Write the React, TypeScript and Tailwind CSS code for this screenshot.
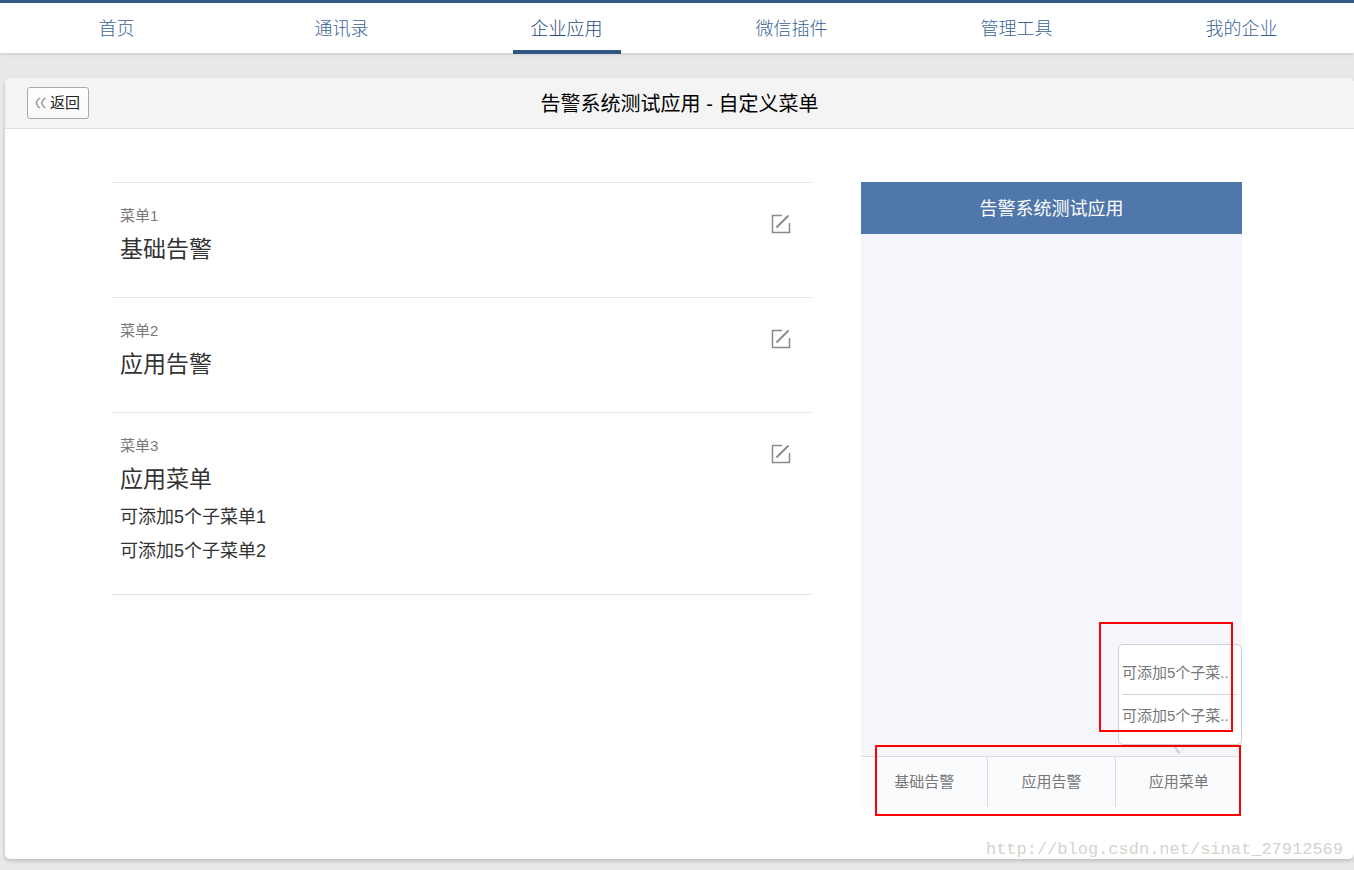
interface MenuItem {
	id: number;
	name: string;
	children: string[];
}

const NAV_ITEMS = ["首页", "通讯录", "企业应用", "微信插件", "管理工具", "我的企业"];
const ACTIVE_NAV = "企业应用";

const MENUS: MenuItem[] = [
	{ id: 1, name: "基础告警", children: [] },
	{ id: 2, name: "应用告警", children: [] },
	{ id: 3, name: "应用菜单", children: ["可添加5个子菜单1", "可添加5个子菜单2"] },
];

// Sub menu names are cut to seven characters in the preview
const shorten = (name: string): string => (name.length > 7 ? `${name.slice(0, 7)}..` : name);

function EditIcon() {
	return (
		<svg width="20" height="20" viewBox="0 0 20 20" fill="none" stroke="#8a8a8a">
			<path d="M11 1.5H1.5V18.5H18.5V9" strokeWidth="1.5" />
			<path d="M5.5 13.5L17.5 1.5" strokeWidth="2" />
		</svg>
	);
}

function BackIcon() {
	return (
		<svg width="12" height="12" viewBox="0 0 12 12" fill="none" stroke="#9a9a9a" strokeWidth="1.5">
			<path d="M5 1L3 2.5L1.2 6L3 9.5L5 11" />
			<path d="M10.5 1L8.5 2.5L6.7 6L8.5 9.5L10.5 11" />
		</svg>
	);
}

function TopNav() {
	return (
		<header className="relative border-t-[3px] border-[#335a86] bg-white shadow-[0_1px_4px_rgba(0,0,0,0.15)]">
			<nav className="flex h-[50px] pl-1">
				{NAV_ITEMS.map((item) => (
					<div key={item} className="flex flex-1 justify-center">
						<a
							href="#"
							className={
								item === ACTIVE_NAV
									? "h-[51px] border-b-4 border-[#2f5784] px-[18px] text-lg leading-[52px] font-light text-[#1f4a7c]"
									: "h-[51px] px-[18px] text-lg leading-[52px] font-light text-[#3a6496]"
							}
						>
							{item}
						</a>
					</div>
				))}
			</nav>
		</header>
	);
}

function MenuRow({ menu }: { menu: MenuItem }) {
	const hasChildren = menu.children.length > 0;

	return (
		<li
			className={
				hasChildren
					? "flex items-start justify-between border-t border-[#e4e4e4] pt-[23px] pr-5 pb-[26px] pl-[9px]"
					: "flex items-start justify-between border-t border-[#e4e4e4] pt-[23px] pr-5 pb-[31px] pl-[9px]"
			}
		>
			<div>
				<div className="text-[15px] leading-5 text-[#7b7b7b]">菜单{menu.id}</div>
				<h2 className="mt-[6px] text-[23px] leading-[34px] text-[#333]">{menu.name}</h2>
				{hasChildren && (
					<ul className="mt-1 text-lg leading-[34px] text-[#333]">
						{menu.children.map((child) => (
							<li key={child}>{child}</li>
						))}
					</ul>
				)}
			</div>
			<button type="button" aria-label={`编辑${menu.name}`} className="mt-2 cursor-pointer">
				<EditIcon />
			</button>
		</li>
	);
}

function PhonePreview() {
	return (
		<section className="relative flex w-[381px] shrink-0 flex-col bg-[#f5f6fb]">
			<div className="h-[52px] bg-[#4f77aa] text-center text-lg leading-[54px] text-white">告警系统测试应用</div>
			<div className="h-[522px]" />
			<div className="flex border-t border-[#d9dbe0] bg-[#fafbfd]">
				{MENUS.map((menu) => (
					<button
						key={menu.id}
						type="button"
						className="h-[50px] flex-1 border-r border-[#d9dbe0] text-[15px] text-[#777] last:border-r-0"
					>
						{menu.name}
					</button>
				))}
			</div>

			{/* Sub menu popup */}
			<div className="absolute right-0 bottom-[62px] w-[124px] rounded-[5px] border border-[#cdd0d8] bg-white py-[7px] pr-1 pl-[3px]">
				<ul className="divide-y divide-[#d3d3d3] text-[15px] leading-[42px] text-[#777]">
					{MENUS[2].children.map((child) => (
						<li key={child} className="whitespace-nowrap">
							{shorten(child)}
						</li>
					))}
				</ul>
				<svg className="absolute top-full left-[53px]" width="14" height="11" viewBox="0 0 14 11">
					<path d="M1 1H13L7 10Z" fill="#fafbfd" />
					<path d="M1.5 1L7.5 9.5" stroke="#cdd0d8" strokeWidth="2.4" />
					<path d="M7.5 9.5L13 1.5" stroke="#dfe1e6" strokeWidth="1" />
				</svg>
			</div>

			{/* Highlight frames */}
			<div className="pointer-events-none absolute top-[440px] left-[238px] h-[110px] w-[134px] border-2 border-[#fe0000]" />
			<div className="pointer-events-none absolute top-[563px] left-[14px] h-[71px] w-[366px] border-2 border-[#fe0000]" />
		</section>
	);
}

export default function App() {
	return (
		<div className="min-h-screen bg-[#e7e9eb] pb-[11px] font-['Liberation_Sans','Noto_Sans_CJK_SC',sans-serif]">
			<TopNav />

			<main className="relative mt-[25px] ml-[5px] rounded-[5px] bg-white shadow-[0_2px_4px_rgba(0,0,0,0.2)]">
				<div className="grid h-[51px] grid-cols-[1fr_auto_1fr] items-center rounded-t-[5px] border-b border-[#dae0e5] bg-[#f4f4f4] px-[22px]">
					<button
						type="button"
						className="flex h-8 w-[62px] items-center gap-[3px] justify-self-start rounded-[3px] border border-[#aaa] bg-linear-to-b from-white to-[#f8f8f8] pl-[7px] text-[15px] text-[#222]"
					>
						<BackIcon />
						返回
					</button>
					<h1 className="pt-0.5 text-xl text-black">告警系统测试应用 - 自定义菜单</h1>
				</div>

				<div className="flex items-start gap-[50px] pt-[53px] pr-28 pb-[52px] pl-[106px]">
					<ul className="flex-1 border-b border-[#e4e4e4]">
						{MENUS.map((menu) => (
							<MenuRow key={menu.id} menu={menu} />
						))}
					</ul>
					<PhonePreview />
				</div>

				<div className="absolute right-[11px] -bottom-px font-['Liberation_Mono',monospace] text-[17px] leading-5 text-[#d4d4ce]">
					http://blog.csdn.net/sinat_27912569
				</div>
			</main>
		</div>
	);
}
